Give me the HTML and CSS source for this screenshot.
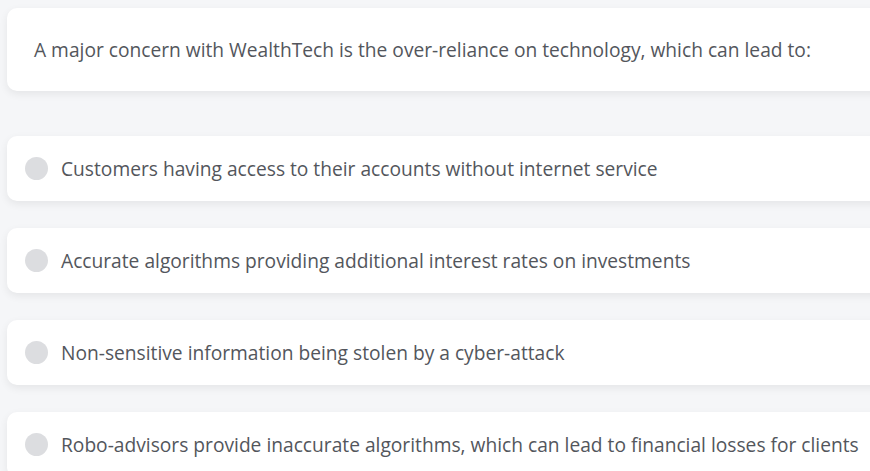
FILE: index.html
```
<!DOCTYPE html>
<html>
<head>
<meta charset="utf-8">
<link rel="stylesheet" href="styles.css">
</head>
<body>
<div class="quiz">
  <div class="question">A major concern with WealthTech is the over-reliance on technology, which can lead to:</div>
  <div class="options">
    <div class="option"><span class="radio"></span><span class="label">Customers having access to their accounts without internet service</span></div>
    <div class="option"><span class="radio"></span><span class="label">Accurate algorithms providing additional interest rates on investments</span></div>
    <div class="option"><span class="radio"></span><span class="label">Non-sensitive information being stolen by a cyber-attack</span></div>
    <div class="option"><span class="radio"></span><span class="label">Robo-advisors provide inaccurate algorithms, which can lead to financial losses for clients</span></div>
  </div>
</div>
</body>
</html>
```
FILE: styles.css
```
html, body {
  margin: 0;
  padding: 0;
  background: #f5f6f8;
  overflow: hidden;
  height: 471px;
}
body {
  font-family: "Open Sans", "Noto Sans", sans-serif;
  color: #53565c;
}
.quiz {
  width: 900px;
  padding: 8px 0 0 7px;
}
.question {
  background: #fff;
  border-radius: 10px;
  box-shadow: 0 3px 8px rgba(0,0,0,0.07);
  height: 83px;
  box-sizing: border-box;
  padding: 0 0 0 27px;
  display: flex;
  align-items: center;
  font-size: 19.2px;
}
.options {
  margin-top: 45px;
  display: flex;
  flex-direction: column;
  gap: 27px;
}
.option {
  background: #fff;
  border-radius: 10px;
  box-shadow: 0 3px 8px rgba(0,0,0,0.07);
  height: 65px;
  box-sizing: border-box;
  padding-left: 18px;
  display: flex;
  align-items: center;
  gap: 13px;
  font-size: 19.2px;
}
.radio {
  width: 23px;
  height: 23px;
  border-radius: 50%;
  background: #dcdde0;
  flex: none;
}
```
